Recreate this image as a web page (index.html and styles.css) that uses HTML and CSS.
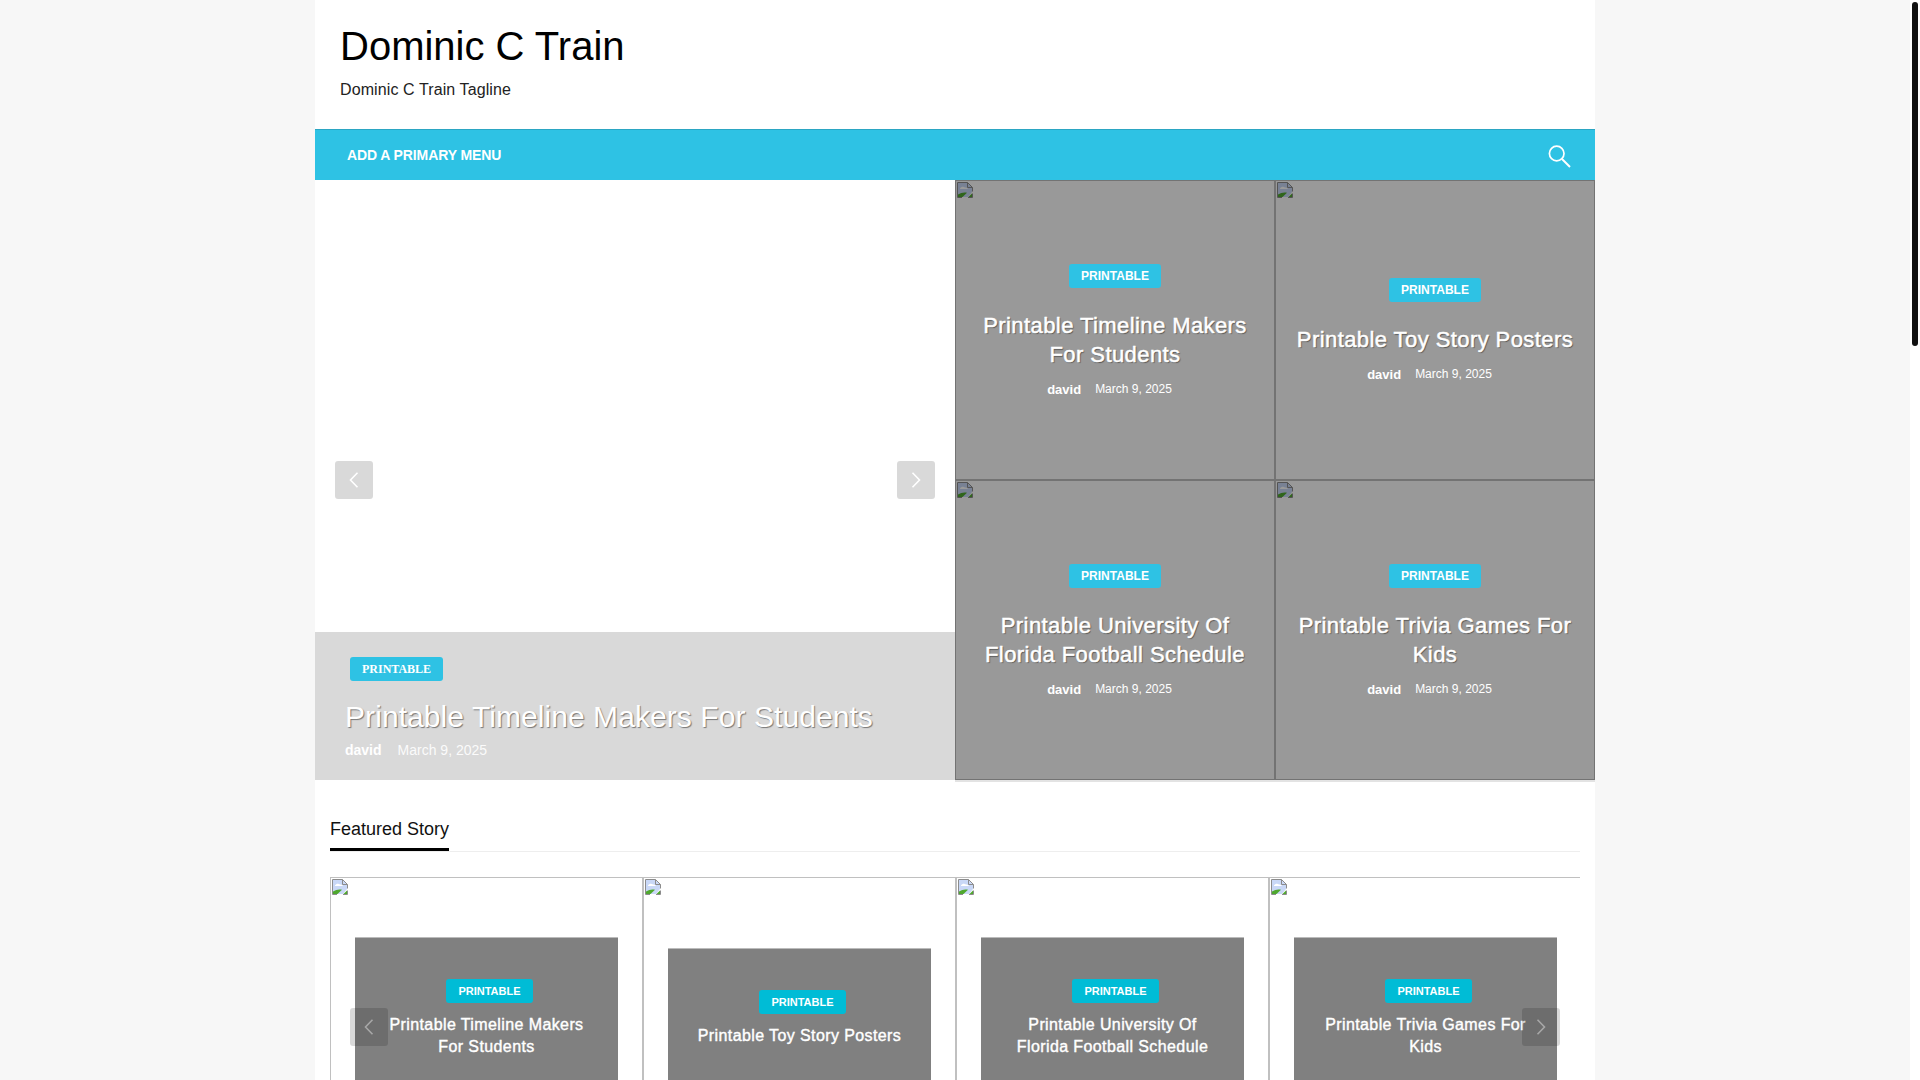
FILE: index.html
```html
<!DOCTYPE html>
<html>
<head>
    <title>Dominic C Train</title>
    <meta name="viewport" content="width=device-width, initial-scale=1.0">
    <link rel="stylesheet" href="styles.css">
</head>
<body>
    <svg class="sprites" width="0" height="0">
        <symbol id="broken" viewBox="0 0 16 16">
            <path d="M1 1H10.5L15 5.5V10L11 15H1Z" fill="#c9d8f7"/>
            <path d="M3 6.5C4 4.5 6.5 4 8 5.5C9.5 5.5 10.5 6 11 7H3Z" fill="#fff"/>
            <path d="M1 15V12.5C4 10.5 7.5 10 10 10.8L5.5 15Z" fill="#4fa82e"/>
            <path d="M15 15H11.5L15 11.5Z" fill="#4fa82e"/>
            <path d="M.5 15.5V.5H10.5L15.5 5.5V9.5M10.5 .5V5.5H15.5M.5 15.5H5M11 15.5H15.5V11.5" fill="none" stroke="#8c8c8c"/>
        </symbol>
        <symbol id="chevron-left" viewBox="0 0 10 16">
            <path d="M8.5 .8L1.5 8L8.5 15.2" fill="none" stroke="currentColor" stroke-width="1.6"/>
        </symbol>
        <symbol id="chevron-right" viewBox="0 0 10 16">
            <path d="M1.5 .8L8.5 8L1.5 15.2" fill="none" stroke="currentColor" stroke-width="1.6"/>
        </symbol>
    </svg>

    <div class="site">
        <header class="site-header">
            <h1 class="site-title">Dominic C Train</h1>
            <p class="site-tagline">Dominic C Train Tagline</p>
        </header>

        <nav class="main-nav">
            <a class="nav-link" href="#">ADD A PRIMARY MENU</a>
            <a class="search-link" href="#" aria-label="Search">
                <svg width="24" height="24" viewBox="0 0 24 24">
                    <circle cx="9.7" cy="9.5" r="7.3" fill="none" stroke="#fff" stroke-width="1.7"/>
                    <path d="M15 15L23 23" fill="none" stroke="#fff" stroke-width="1.9"/>
                </svg>
            </a>
        </nav>

        <section class="hero">
            <div class="hero-slider">
                <div class="hero-caption">
                    <a class="badge badge-serif" href="#">PRINTABLE</a>
                    <h2 class="hero-title">Printable Timeline Makers For Students</h2>
                    <div class="hero-meta"><b>david</b><span>March 9, 2025</span></div>
                </div>
                <button class="arrow arrow-prev"><svg width="10" height="16"><use href="#chevron-left"/></svg></button>
                <button class="arrow arrow-next"><svg width="10" height="16"><use href="#chevron-right"/></svg></button>
            </div>

            <div class="hero-grid">
                <article class="tile">
                    <svg class="broken" width="16" height="16"><use href="#broken"/></svg>
                    <div class="tile-body">
                        <a class="badge" href="#">PRINTABLE</a>
                        <h3 class="tile-title">Printable Timeline Makers For Students</h3>
                        <div class="tile-meta"><b>david</b><span>March 9, 2025</span></div>
                    </div>
                </article>
                <article class="tile">
                    <svg class="broken" width="16" height="16"><use href="#broken"/></svg>
                    <div class="tile-body">
                        <a class="badge" href="#">PRINTABLE</a>
                        <h3 class="tile-title">Printable Toy Story Posters</h3>
                        <div class="tile-meta"><b>david</b><span>March 9, 2025</span></div>
                    </div>
                </article>
                <article class="tile">
                    <svg class="broken" width="16" height="16"><use href="#broken"/></svg>
                    <div class="tile-body">
                        <a class="badge" href="#">PRINTABLE</a>
                        <h3 class="tile-title">Printable University Of Florida Football Schedule</h3>
                        <div class="tile-meta"><b>david</b><span>March 9, 2025</span></div>
                    </div>
                </article>
                <article class="tile">
                    <svg class="broken" width="16" height="16"><use href="#broken"/></svg>
                    <div class="tile-body">
                        <a class="badge" href="#">PRINTABLE</a>
                        <h3 class="tile-title">Printable Trivia Games For Kids</h3>
                        <div class="tile-meta"><b>david</b><span>March 9, 2025</span></div>
                    </div>
                </article>
            </div>
        </section>

        <section class="featured">
            <div class="section-head"><h2 class="section-title">Featured Story</h2></div>
            <div class="carousel">
                <div class="carousel-track">
                    <article class="story">
                        <svg class="broken" width="16" height="16"><use href="#broken"/></svg>
                        <div class="story-box">
                            <a class="badge badge-teal" href="#">PRINTABLE</a>
                            <h3 class="story-title">Printable Timeline Makers For Students</h3>
                        </div>
                    </article>
                    <article class="story">
                        <svg class="broken" width="16" height="16"><use href="#broken"/></svg>
                        <div class="story-box">
                            <a class="badge badge-teal" href="#">PRINTABLE</a>
                            <h3 class="story-title">Printable Toy Story Posters</h3>
                        </div>
                    </article>
                    <article class="story">
                        <svg class="broken" width="16" height="16"><use href="#broken"/></svg>
                        <div class="story-box">
                            <a class="badge badge-teal" href="#">PRINTABLE</a>
                            <h3 class="story-title">Printable University Of Florida Football Schedule</h3>
                        </div>
                    </article>
                    <article class="story">
                        <svg class="broken" width="16" height="16"><use href="#broken"/></svg>
                        <div class="story-box">
                            <a class="badge badge-teal" href="#">PRINTABLE</a>
                            <h3 class="story-title">Printable Trivia Games For Kids</h3>
                        </div>
                    </article>
                </div>
                <button class="arrow arrow-small arrow-prev"><svg width="10" height="16"><use href="#chevron-left"/></svg></button>
                <button class="arrow arrow-small arrow-next"><svg width="10" height="16"><use href="#chevron-right"/></svg></button>
            </div>
        </section>
    </div>

    <div class="scrollbar"><div class="scrollbar-thumb"></div></div>
</body>
</html>
```

FILE: styles.css
```css
body {
    margin: 0;
    padding-right: 10px;
    background: #f7f7f7;
    color: #111;
    font-family: "Liberation Sans", Arial, sans-serif;
}

a {
    color: inherit;
    text-decoration: none;
}

.sprites {
    position: absolute;
}

.scrollbar {
    position: fixed;
    top: 0;
    right: 0;
    bottom: 0;
    width: 10px;
    background: #fff;
}

.scrollbar-thumb {
    height: 344px;
    margin: 2px 2px 0;
    border-radius: 3px;
    background: #111;
}

.site {
    width: 1280px;
    margin: 0 auto;
    background: #fff;
}

/* Header */
.site-header {
    height: 129px;
    box-sizing: border-box;
    padding: 20px 25px 0;
}

.site-title {
    margin: 0;
    font-size: 40px;
    font-weight: normal;
    line-height: 52px;
    color: #000;
}

.site-tagline {
    margin: 8px 0 0;
    font-size: 16px;
    line-height: 20px;
    letter-spacing: 0.1px;
    color: #222;
}

.main-nav {
    display: flex;
    align-items: center;
    justify-content: space-between;
    height: 51px;
    box-sizing: border-box;
    padding: 0 24px 0 32px;
    background: #2ec2e4;
    border-top: 1px solid #2ba6c3;
    color: #fff;
}

.nav-link {
    font-size: 14px;
    font-weight: bold;
    letter-spacing: -0.1px;
}

.search-link {
    display: flex;
    margin-top: 2px;
}

/* Hero */
.hero {
    display: flex;
    align-items: flex-start;
}

.hero-slider {
    position: relative;
    display: flex;
    flex-direction: column;
    justify-content: flex-end;
    width: 640px;
    height: 600px;
}

.hero-caption {
    height: 148px;
    box-sizing: border-box;
    padding: 25px 30px 0;
    background: #d9d9d9;
    color: #fff;
}

.badge {
    display: inline-block;
    height: 24px;
    padding: 0 12px;
    border-radius: 3px;
    background: #2ec2e4;
    color: #fff;
    font-size: 12px;
    font-weight: bold;
    line-height: 24px;
}

.badge-serif {
    margin-left: 5px;
    font-family: "Liberation Serif", serif;
}

.badge-teal {
    margin-left: 6px;
    background: #00bcd6;
    font-size: 11px;
}

.hero-title {
    margin: 17px 0 0;
    font-size: 30px;
    font-weight: normal;
    line-height: 38px;
    letter-spacing: 0.07px;
    text-shadow: 1px 1px 1px #777;
}

.hero-meta {
    margin-top: 5px;
    font-size: 14px;
    line-height: 18px;
}

.hero-meta span {
    margin-left: 16px;
    opacity: 0.9;
}

.hero-grid {
    display: grid;
    grid-template-columns: 320px 320px;
    grid-auto-rows: 300px;
    width: 640px;
    padding-bottom: 2px;
    background: #e3e3e3;
}

.tile {
    position: relative;
    display: flex;
    align-items: center;
    justify-content: center;
    box-sizing: border-box;
    padding: 0 15px;
    background: #fff;
    border: 1px solid #c0c0c0;
    text-align: center;
    color: #fff;
}

.tile::after {
    content: "";
    position: absolute;
    top: -1px;
    right: -1px;
    bottom: -1px;
    left: -1px;
    background: rgba(0, 0, 0, 0.4);
}

.tile-body {
    position: relative;
    z-index: 1;
    width: 100%;
    margin-top: 2px;
}

.broken {
    position: absolute;
    top: 1px;
    left: 1px;
}

.tile-title {
    margin: 23px 0 0;
    font-size: 22px;
    font-weight: normal;
    line-height: 29px;
    letter-spacing: 0.42px;
    -webkit-text-stroke: 0.5px #fff;
    text-shadow: 1px 1px 1px rgba(0, 0, 0, 0.45);
}

.tile-meta {
    margin-top: 12px;
    font-size: 13px;
    line-height: 18px;
}

.tile-meta span {
    position: relative;
    top: -1px;
    margin: 0 11px 0 14px;
    font-size: 12px;
}

/* Featured */
.featured {
    padding: 0 15px;
}

.section-head {
    display: flex;
    margin-top: 35px;
    border-bottom: 1px solid #eee;
}

.section-title {
    margin: 0;
    padding-bottom: 7px;
    border-bottom: 3px solid #000;
    font-size: 18px;
    font-weight: normal;
    line-height: 24px;
}

.carousel {
    position: relative;
    margin-top: 25px;
}

.carousel-track {
    display: flex;
    overflow: hidden;
}

.story {
    position: relative;
    display: flex;
    flex: 0 0 313px;
    align-items: center;
    justify-content: center;
    box-sizing: border-box;
    height: 308px;
    background: #fff;
    border: 1px solid #c0c0c0;
    text-align: center;
    color: #fff;
}

.story-box {
    width: 263px;
    box-sizing: border-box;
    padding: 41px 28px 67px;
    background: #808080;
    border-top: 1px solid #bbb;
}

.story-title {
    margin: 11px -4px 0;
    font-size: 16px;
    font-weight: normal;
    line-height: 22px;
    letter-spacing: 0.4px;
    -webkit-text-stroke: 0.4px #fff;
}

/* Slider arrows */
.arrow {
    position: absolute;
    top: 281px;
    display: flex;
    align-items: center;
    justify-content: center;
    width: 38px;
    height: 38px;
    padding: 0;
    border: none;
    border-radius: 3px;
    background: rgba(0, 0, 0, 0.15);
    color: #fff;
}

.arrow-prev {
    left: 20px;
}

.arrow-next {
    right: 20px;
}

.arrow-small {
    top: 131px;
    color: rgba(255, 255, 255, 0.4);
}
```
